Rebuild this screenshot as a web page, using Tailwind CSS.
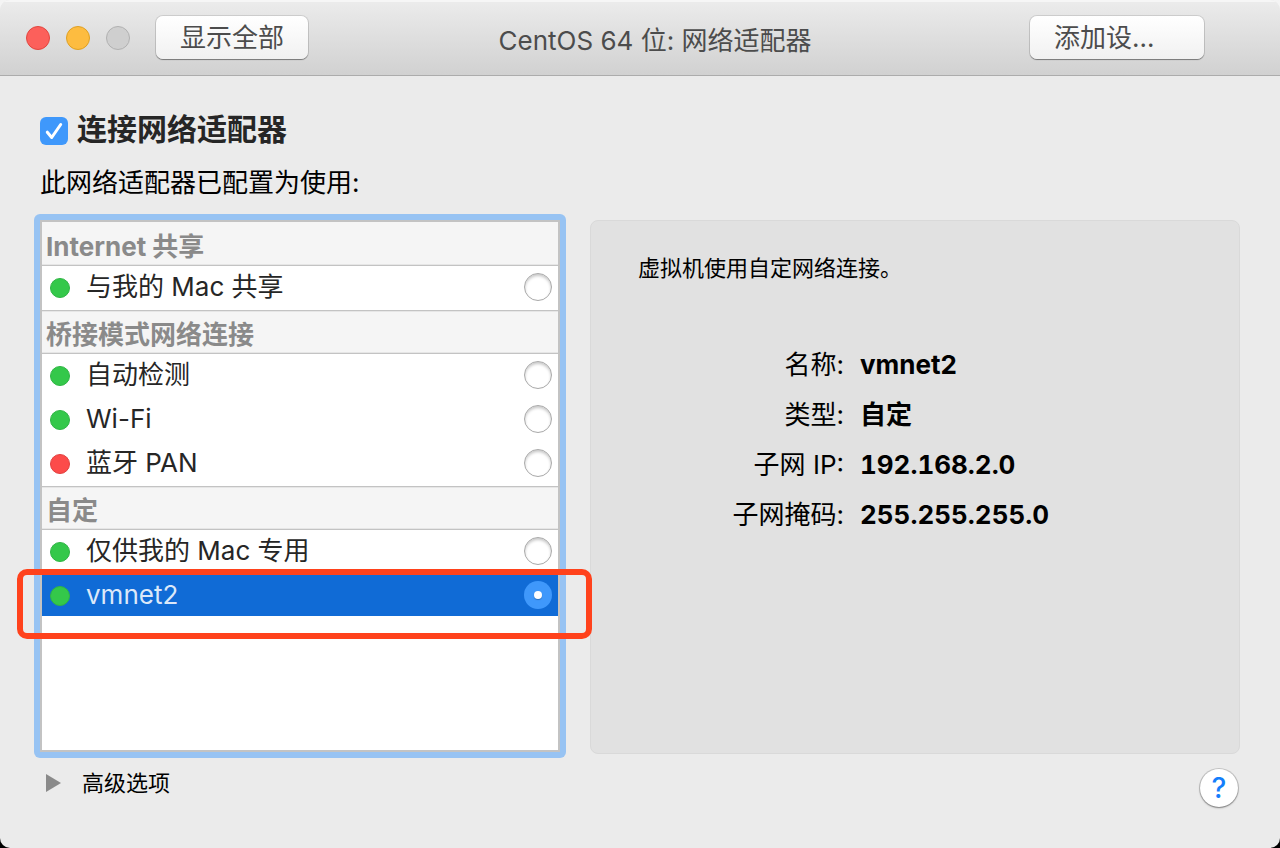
<!DOCTYPE html>
<html lang="zh-CN">
<head>
<meta charset="utf-8">
<meta name="viewport" content="width=device-width, initial-scale=1">
<title>CentOS 64 位: 网络适配器</title>
<script src="https://cdn.jsdelivr.net/npm/@tailwindcss/browser@4"></script>
</head>
<body class="bg-linear-to-b from-[#f4f4f4] from-50% to-black to-50% font-['Inter','Noto_Sans_CJK_SC',sans-serif] text-[26px] leading-10 text-black">
<div class="flex min-h-screen flex-col overflow-hidden rounded-[10px] bg-[#ebebeb]">

  <header class="flex h-[76px] shrink-0 items-start border-b border-[#acacac] bg-linear-to-b from-[#ececec] to-[#d1d1d1] pl-[26px] pr-[76px] pt-4 text-[#4c4c4c] shadow-[inset_0_2px_0_#f6f6f6]">
    <div class="mr-[26px] mt-[10px] flex gap-4">
      <button aria-label="关闭" class="size-6 rounded-full border border-[#e2463f] bg-[#fc605b]"></button>
      <button aria-label="最小化" class="size-6 rounded-full border border-[#dfa023] bg-[#fdbc40]"></button>
      <button aria-label="缩放" disabled class="size-6 rounded-full border border-[#b1b1b1] bg-[#cfcfcf]"></button>
    </div>
    <button class="h-[43px] w-[152px] shrink-0 rounded-[7px] bg-linear-to-b from-white to-[#f1f1f1] shadow-[0_0_0_1px_#0000001c,0_1px_1px_#00000060]">显示全部</button>
    <h1 class="mt-[5px] flex-1 whitespace-nowrap pr-7 text-center">CentOS 64 位: 网络适配器</h1>
    <button class="h-[43px] w-[174px] shrink-0 rounded-[7px] bg-linear-to-b from-white to-[#f1f1f1] pl-6 text-left shadow-[0_0_0_1px_#0000001c,0_1px_1px_#00000060]">添加设…</button>
  </header>

  <main class="flex flex-1 flex-col pl-[34px] pr-10 pt-[34px]">
    <label class="flex items-center gap-[9px] pl-[6px] text-[30px] font-bold leading-[38px] text-[#262626]">
      <span class="mt-[4px] grid">
        <input type="checkbox" checked class="col-start-1 row-start-1 size-7 appearance-none rounded-[6px] bg-[#3f98fb]">
        <svg class="pointer-events-none col-start-1 row-start-1 size-7" viewBox="0 0 28 28" fill="none" stroke="#fff" stroke-width="3" stroke-linecap="round" stroke-linejoin="round" aria-hidden="true"><path d="M7.300 15.200 11.700 20.500 20.700 7.500"/></svg>
      </span>
      连接网络适配器
    </label>
    <p class="mt-[15px] pl-[6px]">此网络适配器已配置为使用:</p>

    <div class="mt-[11px] grid flex-1 grid-cols-[532px_minmax(0,1fr)] gap-6">
      <div class="rounded-[6px] bg-[#97c3f3] p-[6px]">
        <div class="h-full border-2 border-[#c3c3c3] bg-white text-[#262626]">
          <fieldset>
            <legend class="h-11 w-full border-b border-[#c3c3c3] bg-[#f5f5f5] pl-1 pt-[5px] font-bold text-[#8a8a8a] shadow-[inset_0_-1px_0_#e6e6e6]">Internet 共享</legend>
            <label class="mb-[2px] flex h-[42px] items-center pl-2 pr-[6px]">
              <span class="mr-4 mt-[2px] size-5 rounded-full border border-[#2fb544] bg-[#34c84a]"></span>
              <span class="flex-1">与我的 Mac 共享</span>
              <input type="radio" name="net" class="size-7 appearance-none rounded-full border border-[#a9a9a9] bg-white shadow-[inset_0_2px_3px_#00000038]">
            </label>
          </fieldset>
          <fieldset>
            <legend class="h-11 w-full border-y border-[#c3c3c3] bg-[#f5f5f5] pl-1 pt-1 font-bold text-[#8a8a8a] shadow-[inset_0_-1px_0_#e6e6e6,inset_0_1px_0_#e6e6e6]">桥接模式网络连接</legend>
            <label class="mb-[2px] flex h-[42px] items-center pl-2 pr-[6px]">
              <span class="mr-4 mt-[2px] size-5 rounded-full border border-[#2fb544] bg-[#34c84a]"></span>
              <span class="flex-1">自动检测</span>
              <input type="radio" name="net" class="size-7 appearance-none rounded-full border border-[#a9a9a9] bg-white shadow-[inset_0_2px_3px_#00000038]">
            </label>
            <label class="mb-[2px] flex h-[42px] items-center pl-2 pr-[6px]">
              <span class="mr-4 mt-[2px] size-5 rounded-full border border-[#2fb544] bg-[#34c84a]"></span>
              <span class="flex-1">Wi-Fi</span>
              <input type="radio" name="net" class="size-7 appearance-none rounded-full border border-[#a9a9a9] bg-white shadow-[inset_0_2px_3px_#00000038]">
            </label>
            <label class="mb-[2px] flex h-[42px] items-center pl-2 pr-[6px]">
              <span class="mr-4 mt-[2px] size-5 rounded-full border border-[#e2403f] bg-[#fc4b4a]"></span>
              <span class="flex-1">蓝牙 PAN</span>
              <input type="radio" name="net" class="size-7 appearance-none rounded-full border border-[#a9a9a9] bg-white shadow-[inset_0_2px_3px_#00000038]">
            </label>
          </fieldset>
          <fieldset>
            <legend class="h-11 w-full border-y border-[#c3c3c3] bg-[#f5f5f5] pl-1 pt-1 font-bold text-[#8a8a8a] shadow-[inset_0_-1px_0_#e6e6e6,inset_0_1px_0_#e6e6e6]">自定</legend>
            <label class="mb-[2px] flex h-[42px] items-center pl-2 pr-[6px]">
              <span class="mr-4 mt-[2px] size-5 rounded-full border border-[#2fb544] bg-[#34c84a]"></span>
              <span class="flex-1">仅供我的 Mac 专用</span>
              <input type="radio" name="net" class="size-7 appearance-none rounded-full border border-[#a9a9a9] bg-white shadow-[inset_0_2px_3px_#00000038]">
            </label>
            <label class="relative flex h-[42px] items-center bg-[#106bd6] pl-2 pr-[6px] text-[#dbe8f9]">
              <span class="mr-4 mt-[2px] size-5 rounded-full border border-[#2fb544] bg-[#34c84a]"></span>
              <span class="flex-1">vmnet2</span>
              <input type="radio" name="net" checked class="grid size-7 appearance-none place-items-center rounded-full bg-[#3f98fb] before:size-2 before:rounded-full before:bg-white before:shadow-[0_1px_1px_#00000040]">
              <span class="pointer-events-none absolute -bottom-[23px] -left-[25px] -right-[34px] -top-[5px] rounded-[10px] border-[6px] border-[#ff421c]"></span>
            </label>
          </fieldset>
        </div>
      </div>

      <section class="mb-1 mt-[6px] rounded-[8px] border border-[#d9d9d9] bg-[#e1e1e1] px-[47px] pt-[27px]">
        <p class="text-[22px]">虚拟机使用自定网络连接。</p>
        <dl class="mt-[57px] grid grid-cols-[206px_minmax(0,1fr)] gap-x-4 gap-y-[10px]">
          <dt class="text-right">名称:</dt><dd class="font-bold">vmnet2</dd>
          <dt class="text-right">类型:</dt><dd class="font-bold">自定</dd>
          <dt class="text-right">子网 IP:</dt><dd class="font-bold tabular-nums">192.168.2.0</dd>
          <dt class="text-right">子网掩码:</dt><dd class="font-bold tabular-nums">255.255.255.0</dd>
        </dl>
      </section>
    </div>

    <footer class="flex h-[90px] shrink-0 items-start justify-between pl-3">
      <button aria-expanded="false" class="mt-[5px] flex items-center gap-[21px] text-[22px]">
        <svg class="h-[18px] w-[15px]" viewBox="0 0 15 18" fill="#8a8a8a" aria-hidden="true"><path d="M0 0 15 9 0 18z"/></svg>
        高级选项
      </button>
      <button aria-label="帮助" class="mr-[2px] mt-[11px] size-[38px] rounded-full bg-white text-[28px] font-medium leading-[38px] text-[#147efb] shadow-[0_0_0_1px_#00000028,0_1px_2px_#00000060]">?</button>
    </footer>
  </main>
</div>
</body>
</html>
